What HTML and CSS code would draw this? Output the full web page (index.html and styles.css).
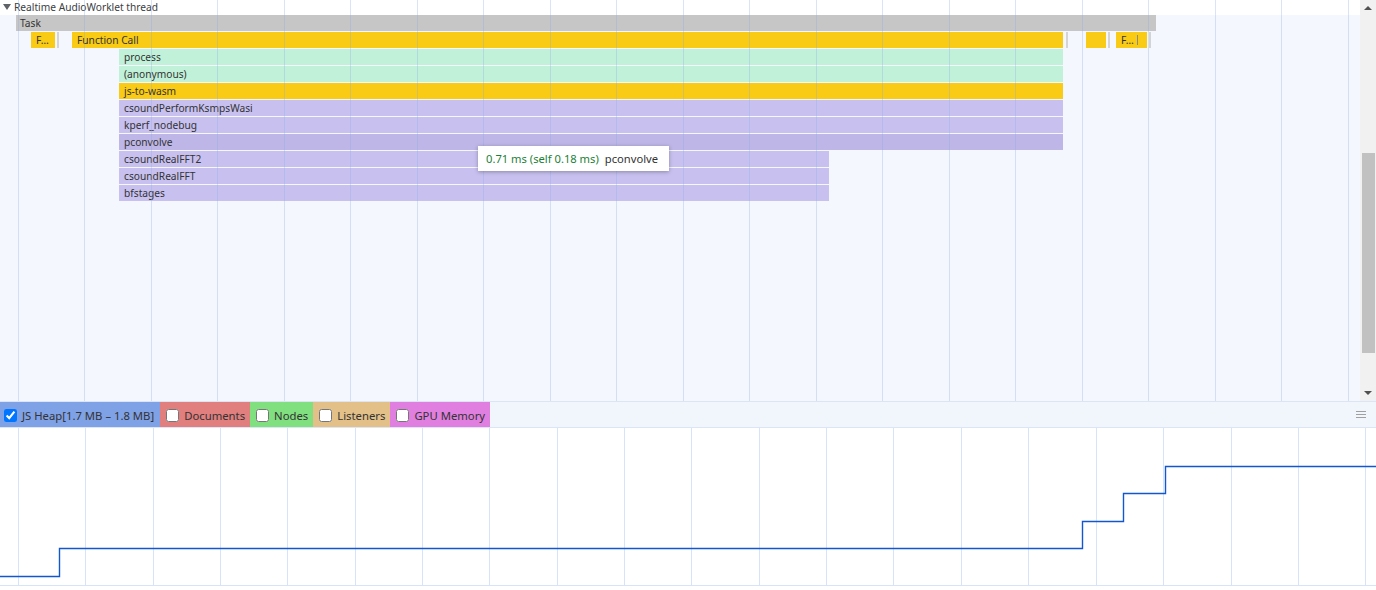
FILE: index.html
```html
<!DOCTYPE html>
<html>
<head>
<meta charset="utf-8">
<link rel="stylesheet" href="styles.css">
</head>
<body>
<div class="app">
  <div class="top">
    <div class="flame">
      <div class="thread-header">
        <svg class="caret" width="8" height="6" viewBox="0 0 8 6"><path d="M0 0H8L4 6Z" fill="#5f6368"/></svg>
        <span class="thread-title">Realtime AudioWorklet thread</span>
      </div>
      <div class="track">
        <div class="row">
          <div class="bar task" style="left:16px;width:1140px">Task</div>
        </div>
        <div class="row">
          <div class="bar fn" style="left:31px;width:24px">F…</div>
          <div class="tick" style="left:57px"></div>
          <div class="bar fn" style="left:72px;width:991px">Function Call</div>
          <div class="tick" style="left:1066px"></div>
          <div class="bar fn" style="left:1086px;width:20px"></div>
          <div class="tick" style="left:1108px"></div>
          <div class="bar fn" style="left:1116px;width:31px">F…<span class="mark"></span></div>
          <div class="tick" style="left:1149px"></div>
        </div>
        <div class="row"><div class="bar js" style="left:119px;width:944px">process</div></div>
        <div class="row"><div class="bar js" style="left:119px;width:944px">(anonymous)</div></div>
        <div class="row"><div class="bar fn" style="left:119px;width:944px">js-to-wasm</div></div>
        <div class="row"><div class="bar wasm" style="left:119px;width:944px">csoundPerformKsmpsWasi</div></div>
        <div class="row"><div class="bar wasm" style="left:119px;width:944px">kperf_nodebug</div></div>
        <div class="row"><div class="bar wasm hover" style="left:119px;width:944px">pconvolve</div></div>
        <div class="row"><div class="bar wasm" style="left:119px;width:710px">csoundRealFFT2</div></div>
        <div class="row"><div class="bar wasm" style="left:119px;width:710px">csoundRealFFT</div></div>
        <div class="row"><div class="bar wasm" style="left:119px;width:710px">bfstages</div></div>
      </div>
      <svg class="grid" width="1360" height="401">
        <g stroke="rgba(140,172,228,0.32)" stroke-width="1">
          <line x1="18.5" y1="0" x2="18.5" y2="401"/>
          <line x1="84.5" y1="0" x2="84.5" y2="401"/>
          <line x1="151.5" y1="0" x2="151.5" y2="401"/>
          <line x1="217.5" y1="0" x2="217.5" y2="401"/>
          <line x1="284.5" y1="0" x2="284.5" y2="401"/>
          <line x1="350.5" y1="0" x2="350.5" y2="401"/>
          <line x1="417.5" y1="0" x2="417.5" y2="401"/>
          <line x1="483.5" y1="0" x2="483.5" y2="401"/>
          <line x1="550.5" y1="0" x2="550.5" y2="401"/>
          <line x1="616.5" y1="0" x2="616.5" y2="401"/>
          <line x1="683.5" y1="0" x2="683.5" y2="401"/>
          <line x1="749.5" y1="0" x2="749.5" y2="401"/>
          <line x1="816.5" y1="0" x2="816.5" y2="401"/>
          <line x1="882.5" y1="0" x2="882.5" y2="401"/>
          <line x1="949.5" y1="0" x2="949.5" y2="401"/>
          <line x1="1015.5" y1="0" x2="1015.5" y2="401"/>
          <line x1="1082.5" y1="0" x2="1082.5" y2="401"/>
          <line x1="1148.5" y1="0" x2="1148.5" y2="401"/>
          <line x1="1215.5" y1="0" x2="1215.5" y2="401"/>
          <line x1="1281.5" y1="0" x2="1281.5" y2="401"/>
          <line x1="1348.5" y1="0" x2="1348.5" y2="401"/>
        </g>
      </svg>
      <div class="tooltip"><span class="time">0.71 ms (self 0.18 ms)</span><span class="name">pconvolve</span></div>
    </div>
    <div class="scrollbar">
      <svg class="arrow" width="16" height="16" viewBox="0 0 16 16"><path d="M4 10H12L8 6Z" fill="#505050"/></svg>
      <div class="sb-track"><div class="thumb"></div></div>
      <svg class="arrow" width="16" height="16" viewBox="0 0 16 16"><path d="M4 6H12L8 10Z" fill="#505050"/></svg>
    </div>
  </div>
  <div class="legend">
    <label class="item heap"><input type="checkbox" checked><span>JS Heap[1.7 MB – 1.8 MB]</span></label>
    <label class="item docs"><input type="checkbox"><span>Documents</span></label>
    <label class="item nodes"><input type="checkbox"><span>Nodes</span></label>
    <label class="item listeners"><input type="checkbox"><span>Listeners</span></label>
    <label class="item gpu"><input type="checkbox"><span>GPU Memory</span></label>
    <div class="spacer"></div>
    <svg class="menu" width="10" height="8" viewBox="0 0 10 8"><path d="M0 0.5H10M0 3.5H10M0 6.5H10" stroke="#a0a0a0" stroke-width="1"/></svg>
  </div>
  <div class="graph">
    <svg width="1376" height="158" viewBox="0 0 1376 158">
      <g stroke="#d6e3f8" stroke-width="1">
        <line x1="18.5" y1="0" x2="18.5" y2="158"/>
        <line x1="85.5" y1="0" x2="85.5" y2="158"/>
        <line x1="153.5" y1="0" x2="153.5" y2="158"/>
        <line x1="220.5" y1="0" x2="220.5" y2="158"/>
        <line x1="287.5" y1="0" x2="287.5" y2="158"/>
        <line x1="355.5" y1="0" x2="355.5" y2="158"/>
        <line x1="422.5" y1="0" x2="422.5" y2="158"/>
        <line x1="489.5" y1="0" x2="489.5" y2="158"/>
        <line x1="557.5" y1="0" x2="557.5" y2="158"/>
        <line x1="624.5" y1="0" x2="624.5" y2="158"/>
        <line x1="691.5" y1="0" x2="691.5" y2="158"/>
        <line x1="759.5" y1="0" x2="759.5" y2="158"/>
        <line x1="826.5" y1="0" x2="826.5" y2="158"/>
        <line x1="893.5" y1="0" x2="893.5" y2="158"/>
        <line x1="961.5" y1="0" x2="961.5" y2="158"/>
        <line x1="1028.5" y1="0" x2="1028.5" y2="158"/>
        <line x1="1096.5" y1="0" x2="1096.5" y2="158"/>
        <line x1="1163.5" y1="0" x2="1163.5" y2="158"/>
        <line x1="1231.5" y1="0" x2="1231.5" y2="158"/>
        <line x1="1298.5" y1="0" x2="1298.5" y2="158"/>
        <line x1="1365.5" y1="0" x2="1365.5" y2="158"/>
      </g>
      <path d="M0 148.5H59.5V120.5H1082.5V93.5H1123.5V65.5H1165.5V38.5H1376" fill="none" stroke="#1257d0" stroke-width="1.4"/>
    </svg>
  </div>
</div>
</body>
</html>
```

FILE: styles.css
```css
* { box-sizing: border-box; }
html, body { margin: 0; padding: 0; }
body {
  width: 1376px;
  height: 590px;
  overflow: hidden;
  background: #ffffff;
  font-family: "Noto Sans", "Open Sans", sans-serif;
  color: #333333;
}
.app { display: flex; flex-direction: column; height: 590px; }
.top { display: flex; height: 401px; }
.flame { position: relative; flex: 1; display: flex; flex-direction: column; overflow: hidden; }
.thread-header {
  height: 15px;
  display: flex;
  align-items: center;
  background: #ffffff;
  font-size: 10.2px;
  line-height: 14px;
  color: #3c4043;
  padding-left: 3px;
}
.caret { margin-right: 3px; margin-top: -1px; }
.thread-title { margin-top: -2px; }
.track { flex: 1; background: #f4f8fe; }
.row { position: relative; height: 16px; margin-bottom: 1px; }
.bar {
  position: absolute;
  top: 0;
  height: 16px;
  font-size: 10.2px;
  line-height: 16px;
  padding-left: 5px;
  white-space: nowrap;
  overflow: hidden;
  color: #333333;
}
.task { background: #c6c6c6; padding-left: 4px; }
.fn { background: #f9cb14; }
.js { background: #c1f1d8; }
.wasm { background: #c8c1f0; }
.wasm.hover { background: #bdb6e6; }
.tick { position: absolute; top: 0; width: 2px; height: 16px; background: #d4d4d4; }
.mark { display: inline-block; width: 1px; height: 10px; background: #8a8a8a; margin-left: 3px; vertical-align: -1px; }
.grid { position: absolute; left: 0; top: 0; pointer-events: none; }
.tooltip {
  position: absolute;
  left: 478px;
  top: 146px;
  height: 25px;
  padding: 0 11px 0 8px;
  background: #ffffff;
  box-shadow: 0 1px 4px rgba(0,0,0,0.3);
  font-size: 11.2px;
  line-height: 25px;
  white-space: nowrap;
}
.tooltip .time { color: #1a7f37; margin-right: 6px; }
.tooltip .name { color: #333333; }
.scrollbar { width: 16px; background: #f1f1f1; display: flex; flex-direction: column; }
.arrow { display: block; }
.sb-track { flex: 1; position: relative; }
.thumb { position: absolute; left: 2px; right: 1px; top: 137px; height: 200px; background: #c1c1c1; }
.legend {
  height: 27px;
  display: flex;
  align-items: stretch;
  background: #f1f6fd;
  border-top: 1px solid #dbe5f5;
  border-bottom: 1px solid #dbe5f5;
  font-size: 11.3px;
  color: #333333;
}
.item { display: flex; align-items: center; padding: 1px 5px 0 5px; }
.item input { width: 13px; height: 13px; margin: 0 5px 0 1px; }
.heap { background: #7fa1e6; padding-left: 3px; padding-right: 6px; }
.docs { background: #e17e7e; }
.nodes { background: #80e07f; }
.listeners { background: #e2c087; }
.gpu { background: #e17fe0; }
.spacer { flex: 1; }
.menu { align-self: center; margin-right: 10px; }
.graph { height: 158px; border-bottom: 1px solid #d6e3f8; }
.graph svg { display: block; }
```
